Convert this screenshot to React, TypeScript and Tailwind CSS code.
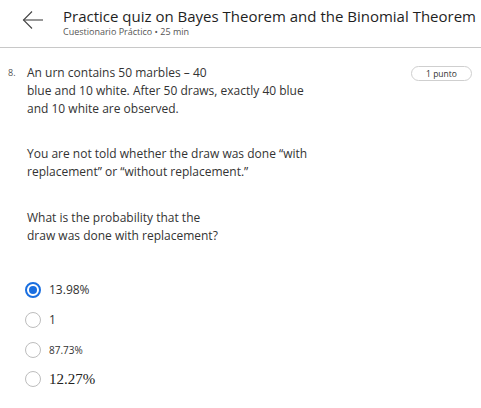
import React from "react";

const options = [
  { label: "13.98%", selected: true, cls: "text-[12px]", h: "h-[31px]" },
  { label: "1", selected: false, cls: "text-[12px]", h: "h-[30px]" },
  { label: "87.73%", selected: false, cls: "text-[10px]", h: "h-[30px]" },
  { label: "12.27%", selected: false, cls: "text-[15px] font-['Liberation_Serif',serif] text-[#222]", h: "h-[28px]" },
];

export default function App() {
  return (
    <div className="w-[481px] h-[408px] bg-white font-['Open_Sans',sans-serif] text-[#333] overflow-hidden">
      <header className="flex items-start h-[48px] border-b border-[#c8c8c8]">
        <div className="pl-[22px] pt-[10px]">
          <svg width="22" height="20" viewBox="0 0 22 20" fill="none" stroke="#444" strokeWidth="1.1">
            <path d="M21 10H1.5" />
            <path d="M10 1.5L1.5 10L10 18.5" />
          </svg>
        </div>
        <div className="ml-[19px] pt-[6px] flex flex-col">
          <div className="text-[15px] leading-[21px] text-[#1f1f1f] whitespace-nowrap">
            Practice quiz on Bayes Theorem and the Binomial Theorem
          </div>
          <div className="text-[9px] leading-[12px] text-[#555] mt-[-1px]">
            Cuestionario Práctico • 25 min
          </div>
        </div>
      </header>

      <div className="flex pt-[16px] pr-[9px]">
        <div className="w-[27px] pl-[8px] text-[9px] leading-[18px] text-[#555]">8.</div>
        <div className="flex-1 text-[12px] leading-[18px]">
          <div className="flex items-start justify-between">
            <p className="w-[290px]">
              An urn contains 50 marbles – 40
              <br />
              blue and 10 white. After 50 draws, exactly 40 blue
              <br />
              and 10 white are observed.
            </p>
            <span className="mt-[2px] h-[15px] w-[61px] rounded-full border border-[#cfcfcf] text-[8.5px] leading-[13px] text-center text-[#333]">
              1 punto
            </span>
          </div>
          <p className="mt-[27px]">
            You are not told whether the draw was done “with
            <br />
            replacement” or “without replacement.”
          </p>
          <p className="mt-[28px]">
            What is the probability that the
            <br />
            draw was done with replacement?
          </p>

          <div className="mt-[29px] flex flex-col">
            {options.map((o, i) => (
              <label key={i} className={`flex items-center ${o.h} -ml-[2px]`}>
                {o.selected ? (
                  <span className="w-[16px] h-[16px] rounded-full border-2 border-[#1a6fe0] flex items-center justify-center">
                    <span className="w-[8px] h-[8px] rounded-full bg-[#1a6fe0]" />
                  </span>
                ) : (
                  <span className="w-[16px] h-[16px] rounded-full border-[1.5px] border-[#bdbdbd]" />
                )}
                <span className={`ml-[8px] ${o.cls}`}>{o.label}</span>
              </label>
            ))}
          </div>
        </div>
      </div>
    </div>
  );
}
